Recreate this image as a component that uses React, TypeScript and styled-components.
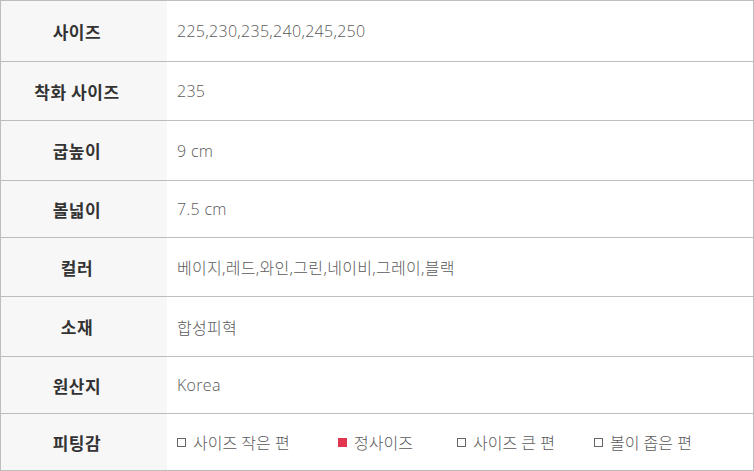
import React from 'react';
import styled, { createGlobalStyle } from 'styled-components';

const GlobalStyle = createGlobalStyle`
  body {
    margin: 0;
    background: #ffffff;
    font-family: "Noto Sans CJK KR", "Noto Sans", sans-serif;
  }
`;

interface Row {
  label: string;
  value?: string;
  height: number;
}

const rows: Row[] = [
  { label: '사이즈', value: '225,230,235,240,245,250', height: 61 },
  { label: '착화 사이즈', value: '235', height: 59 },
  { label: '굽높이', value: '9 cm', height: 60 },
  { label: '볼넓이', value: '7.5 cm', height: 57 },
  { label: '컬러', value: '베이지,레드,와인,그린,네이비,그레이,블랙', height: 59 },
  { label: '소재', value: '합성피혁', height: 60 },
  { label: '원산지', value: 'Korea', height: 57 },
  { label: '피팅감', height: 57 },
];

const fits = [
  { text: '사이즈 작은 편', checked: false, width: 161 },
  { text: '정사이즈', checked: true, width: 119 },
  { text: '사이즈 큰 편', checked: false, width: 137 },
  { text: '볼이 좁은 편', checked: false, width: 120 },
];

const Table = styled.div`
  width: 754px;
  height: 471px;
  box-sizing: border-box;
  border: 1px solid #bdbdbd;
  display: flex;
  flex-direction: column;
`;

const RowBox = styled.div<{ $h: number; $last?: boolean }>`
  display: grid;
  grid-template-columns: 166px 1fr;
  height: ${(p) => p.$h}px;
  box-sizing: border-box;
  border-bottom: ${(p) => (p.$last ? 'none' : '1px solid #bdbdbd')};
  flex: ${(p) => (p.$last ? '1' : 'none')};
`;

const Label = styled.div`
  background: #f7f7f7;
  display: flex;
  align-items: center;
  justify-content: center;
  padding-right: 14px;
  font-size: 17px;
  font-weight: 700;
  color: #333333;
  letter-spacing: 0.6px;
`;

const Value = styled.div`
  display: flex;
  align-items: center;
  padding-left: 10px;
  font-family: "Open Sans", "Noto Sans CJK KR", sans-serif;
  font-size: 16px;
  font-weight: 300;
  color: #5a5a5a;
`;

const Wide = styled.span`
  letter-spacing: 0.3px;
`;

const FitItem = styled.div<{ $w: number }>`
  width: ${(p) => p.$w}px;
  display: flex;
  align-items: center;
  gap: 7px;
`;

const Box = styled.span<{ $on: boolean }>`
  width: 9px;
  height: 9px;
  box-sizing: border-box;
  border: 1px solid ${(p) => (p.$on ? '#e2354f' : '#666666')};
  background: ${(p) => (p.$on ? '#e2354f' : 'transparent')};
  margin-top: 1px;
`;

export default function App() {
  return (
    <>
      <GlobalStyle />
      <Table>
        {rows.map((r, i) => (
          <RowBox key={r.label} $h={r.height} $last={i === rows.length - 1}>
            <Label>{r.label}</Label>
            <Value>
              {r.value ? (
                <Wide>{r.value}</Wide>
              ) : (
                fits.map((f) => (
                  <FitItem key={f.text} $w={f.width}>
                    <Box $on={f.checked} />
                    {f.text}
                  </FitItem>
                ))
              )}
            </Value>
          </RowBox>
        ))}
      </Table>
    </>
  );
}
